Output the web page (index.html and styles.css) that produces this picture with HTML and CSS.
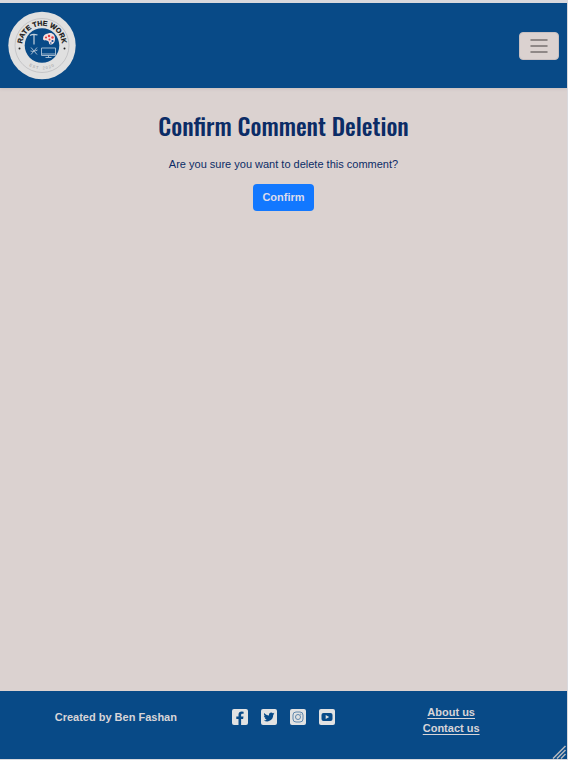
FILE: index.html
```
<!DOCTYPE html>
<html lang="en">
<head>
<meta charset="utf-8">
<meta name="viewport" content="width=device-width, initial-scale=1">
<title>Confirm Comment Deletion</title>
<link rel="stylesheet" href="styles.css">
</head>
<body>
<header class="navbar">
  <a class="brand" href="#" aria-label="Rate the Work home">
    <svg class="logo" viewBox="0 0 68 68" aria-hidden="true">
      <defs>
        <path id="arc-top" d="M14 34a20 20 0 0 0 0 3M14 34a20 20 0 0 1 40 0"/>
        <path id="arc-name" d="M14.600 39a20 20 0 1 1 38.800 0"/>
        <path id="arc-bottom" d="M10 34a24 24 0 0 0 48 0"/>
      </defs>
      <circle cx="34" cy="34" r="33.700" fill="#e0e0e0"/>
      <circle cx="34" cy="34" r="27" fill="none" stroke="#b9b9bb" stroke-width=".7"/>
      <circle cx="34" cy="34" r="17.300" fill="#084a87"/>
      <text class="logo-name"><textPath href="#arc-name" startOffset="50%" text-anchor="middle">RATE THE WORK</textPath></text>
      <text class="logo-date"><textPath href="#arc-bottom" startOffset="50%" text-anchor="middle">EST. 2020</textPath></text>
      <circle cx="11.500" cy="37" r="1" fill="#222"/>
      <circle cx="56.500" cy="37" r="1" fill="#222"/>
      <path d="M22 24q3-2 7.500-.5M26 23v10" fill="none" stroke="#c3d0dc" stroke-width="1.200"/>
      <path d="M40 22c4-1.500 7 1 7 5s-2 6-4.500 6c-2 0-1-2.500-2.500-3.500s-5 .5-5-2.500 2-4.500 5-5z" fill="#f1dede"/>
      <g fill="#e03a40"><circle cx="38" cy="26" r="1.100"/><circle cx="41" cy="24.500" r="1.200"/><circle cx="44.500" cy="26" r="1.200"/><circle cx="41.500" cy="28" r="1"/></g>
      <g fill="#174f9a"><circle cx="44.500" cy="29.500" r="1.100"/><circle cx="42.800" cy="31.500" r=".8"/></g>
      <path d="M23 36l6 7M29 36l-6 7M22.500 39.500l3 .5M27 39.500l2.500-1" fill="none" stroke="#b5c5d5" stroke-width=".9"/>
      <path d="M33.500 36.500h14v7.500h-14zM33.500 42.500h14M37.500 46h6M40.500 44v2" fill="none" stroke="#b0c4d6" stroke-width=".9"/>
    </svg>
  </a>
  <button class="toggler" type="button" aria-label="Toggle navigation">
    <svg class="bars" viewBox="0 0 18 14" aria-hidden="true"><path d="M1 1h16M1 7h16M1 13h16" fill="none" stroke="#77706f" stroke-width="1.500" stroke-linecap="round"/></svg>
  </button>
</header>
<main class="content">
  <h1 class="title">Confirm Comment Deletion</h1>
  <p class="question">Are you sure you want to delete this comment?</p>
  <form><button class="confirm" type="submit">Confirm</button></form>
</main>
<footer class="footer">
  <p class="credit">Created by Ben Fashan</p>
  <nav class="social" aria-label="Social media">
    <a href="#" aria-label="Facebook"><svg class="icon" viewBox="0 0 16 16"><rect width="16" height="16" rx="2" fill="#e2e2e2"/><path d="M6.500 16v-6H4.300V7.500h2.200V5.800c0-2.200 1.300-3.300 3.200-3.300l1.900.2v2.100h-1.100c-1 0-1.400.5-1.400 1.200v1.500h2.400l-.4 2.500h-2v6z" fill="#084a87"/></svg></a>
    <a href="#" aria-label="Twitter"><svg class="icon" viewBox="0 0 16 16"><rect width="16" height="16" rx="2" fill="#e2e2e2"/><path d="M13.400 4.600c-.4.200-.8.300-1.200.3.500-.2.800-.6 1-1.100-.5.200-.9.400-1.400.5C10.400 2.800 7.600 3.900 8 6.400 6 6.300 4.400 5.400 3.300 4c-.6 1-.3 2.300.7 3-.4 0-.7-.1-1-.3 0 1.100.7 2 1.800 2.200-.3.100-.7.100-1 0 .3.900 1.100 1.500 2.100 1.600-.9.700-2 1-3.200.9 4.400 2.700 9.600-.2 9.500-5.300z" fill="#084a87"/></svg></a>
    <a href="#" aria-label="Instagram"><svg class="icon" viewBox="0 0 16 16"><rect width="16" height="16" rx="2" fill="#e2e2e2"/><rect x="3" y="3" width="10" height="10" rx="3" fill="none" stroke="#5f87ad"/><circle cx="8" cy="8" r="2.500" fill="none" stroke="#5f87ad"/><circle cx="10.800" cy="5.200" r=".6" fill="#5f87ad"/></svg></a>
    <a href="#" aria-label="YouTube"><svg class="icon" viewBox="0 0 16 16"><rect width="16" height="16" rx="2" fill="#e2e2e2"/><rect x="2.500" y="4" width="11" height="8" rx="2" fill="#084a87"/><path d="M6.700 6v4l3.500-2z" fill="#e2e2e2"/></svg></a>
  </nav>
  <nav class="links" aria-label="Site">
    <a href="#">About us</a>
    <a href="#">Contact us</a>
  </nav>
  <svg class="grip" viewBox="0 0 14 14" aria-hidden="true"><path d="M1 13.500L13.500 1M5 13.500L13.500 5M9 13.500l4.500-4.500" fill="none" stroke="#b9b9bd" stroke-width="1.500"/></svg>
</footer>
</body>
</html>
```
FILE: styles.css
```
* {
  box-sizing: border-box;
}

body {
  margin: 0;
  min-height: 100vh;
  display: flex;
  flex-direction: column;
  border: solid #d9d9dd;
  border-width: 3px 1px 1px 0;
  background: #dbd2d0;
  color: #0b2c66;
  font: 11px/16px "Liberation Sans", Arial, sans-serif;
}

h1,
p {
  margin: 0;
}

.navbar {
  display: flex;
  align-items: center;
  justify-content: space-between;
  padding: 8px;
  background: #084a87;
  box-shadow: 0 1px 3px #c9bfbd;
}

.brand,
.logo,
.icon,
.bars {
  display: block;
}

.logo {
  width: 68px;
  height: 69px;
}

.logo-name {
  font: bold 7px "Liberation Sans", Arial, sans-serif;
  fill: #151515;
  stroke: #151515;
  stroke-width: 0.2px;
}

.logo-date {
  font: 4px "Liberation Sans", Arial, sans-serif;
  letter-spacing: 1px;
  fill: #999;
}

.toggler {
  padding: 6px 10px;
  border: 1px solid #c8c0c1;
  border-radius: 4px;
  background: #dbd2d0;
}

.bars {
  width: 18px;
  height: 14px;
}

.content {
  flex: 1;
  padding: 19px 16px;
  text-align: center;
}

.title {
  margin-bottom: 13px;
  font: 500 24px/36px Oswald, "Liberation Sans Narrow", "Liberation Sans", sans-serif;
}

.question {
  margin-bottom: 12px;
}

.confirm {
  padding: 5px 9px 6px;
  border: 0;
  border-radius: 4px;
  background: #1278ff;
  color: #dcdcec;
  font: bold 11px/16px "Liberation Sans", Arial, sans-serif;
}

.footer {
  position: relative;
  display: grid;
  grid-template-columns: 1fr 1fr 1fr;
  align-items: start;
  padding: 13px 32px 23px;
  background: #084a87;
  color: #d8d5d8;
  font-weight: bold;
  text-align: center;
}

.credit,
.social {
  padding-top: 5px;
}

.social {
  display: flex;
  justify-content: center;
  gap: 13px;
}

.icon {
  width: 16px;
  height: 16px;
}

.links {
  display: flex;
  flex-direction: column;
  align-items: center;
}

.links a {
  color: inherit;
  text-underline-offset: 2px;
}

.grip {
  position: absolute;
  right: 1px;
  bottom: 0;
  width: 14px;
  height: 14px;
}
```
